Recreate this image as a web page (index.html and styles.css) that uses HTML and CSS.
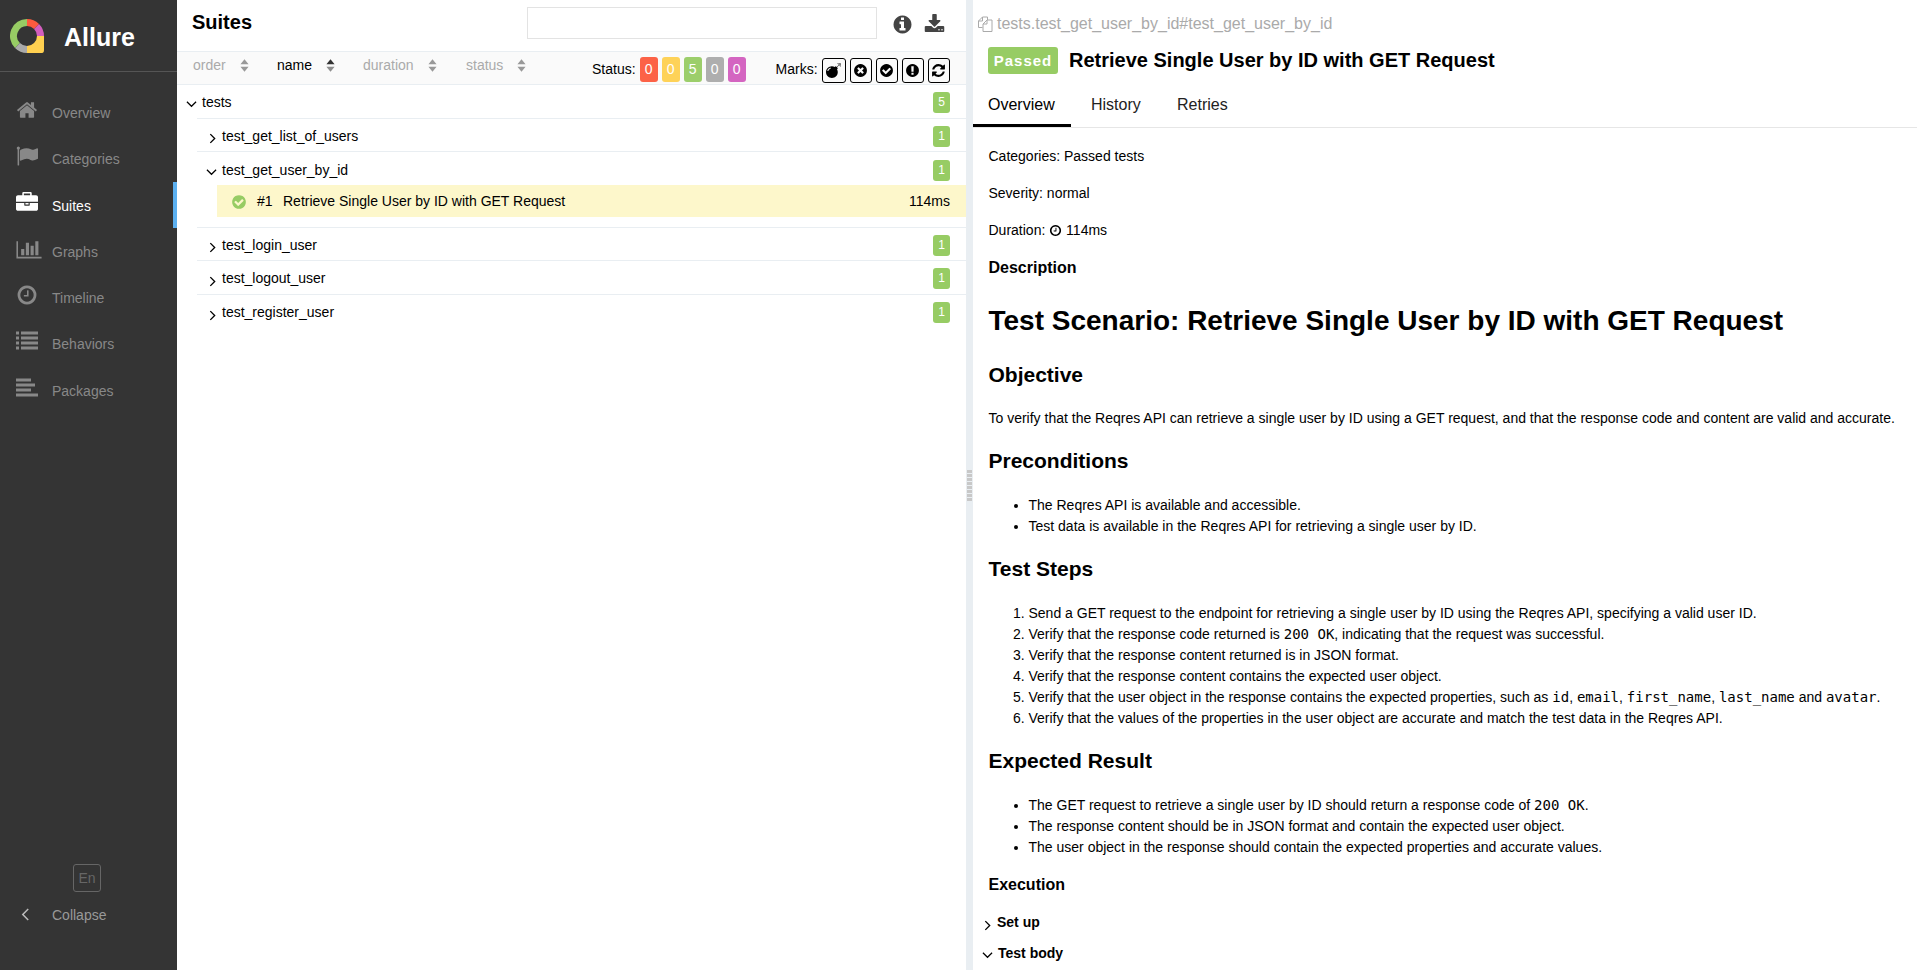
FILE: index.html
```html
<!DOCTYPE html>
<html lang="en">
<head>
    <meta charset="UTF-8">
    <title>Allure Report</title>
    <link rel="stylesheet" href="styles.css">
</head>
<body>
    <svg class="sprite" aria-hidden="true">
        <symbol id="i-home" viewBox="0 0 1792 1792"><path d="M1472 992v480q0 26-19 45t-45 19h-384v-384h-256v384h-384q-26 0-45-19t-19-45v-480q0-1 .5-3t.5-3l575-474 575 474q1 2 1 6zm223-69l-62 74q-8 9-21 11h-3q-13 0-21-7l-692-577-692 577q-12 8-24 7-13-2-21-11l-62-74q-8-10-7-23.5t11-21.5l719-599q32-26 76-26t76 26l244 204v-195q0-14 9-23t23-9h192q14 0 23 9t9 23v408l219 182q10 8 11 21.5t-7 23.5z"/></symbol>
        <symbol id="i-flag" viewBox="0 0 1792 1792"><path d="M320 256q0 72-64 110v1266q0 13-9.5 22.5t-22.5 9.5h-64q-13 0-22.5-9.5t-9.5-22.5v-1266q-64-38-64-110 0-53 37.5-90.5t90.5-37.5 90.5 37.5 37.5 90.5zm1472 64v763q0 25-12.5 38.5t-39.5 27.5q-215 116-369 116-61 0-123.5-22t-108.5-48-115.5-48-142.5-22q-192 0-464 146-17 9-33 9-26 0-45-19t-19-45v-742q0-32 31-55 21-14 79-43 236-120 421-120 107 0 200 29t219 88q38 19 88 19 54 0 117.5-21t110-47 88-47 54.5-21q26 0 45 19t19 45z"/></symbol>
        <symbol id="i-briefcase" viewBox="0 0 1792 1792"><path d="M640 256h512v-128h-512v128zm1152 640v480q0 66-47 113t-113 47h-1472q-66 0-113-47t-47-113v-480h672v160q0 26 19 45t45 19h320q26 0 45-19t19-45v-160h672zm-768 0v128h-256v-128h256zm768-480v384h-1792v-384q0-66 47-113t113-47h352v-160q0-40 28-68t68-28h576q40 0 68 28t28 68v160h352q66 0 113 47t47 113z"/></symbol>
        <symbol id="i-chart" viewBox="0 0 2048 1792"><path d="M640 896v512h-256v-512h256zm384-512v1024h-256v-1024h256zm1024 1152v128h-2048v-1408h128v1280h1920zm-640-896v768h-256v-768h256zm384-384v1152h-256v-1152h256z"/></symbol>
        <symbol id="i-clock" viewBox="0 0 1792 1792"><path d="M1024 544v448q0 14-9 23t-23 9h-320q-14 0-23-9t-9-23v-64q0-14 9-23t23-9h224v-352q0-14 9-23t23-9h64q14 0 23 9t9 23zm416 352q0-148-73-273t-198-198-273-73-273 73-198 198-73 273 73 273 198 198 273 73 273-73 198-198 73-273zm224 0q0 209-103 385.5t-279.5 279.5-385.5 103-385.5-103-279.5-279.5-103-385.5 103-385.5 279.5-279.5 385.5-103 385.5 103 279.5 279.5 103 385.5z"/></symbol>
        <symbol id="i-list" viewBox="0 0 22 19"><path d="M0 0h3v3h-3zM5 0h17v3h-17zM0 5h3v3h-3zM5 5h17v3h-17zM0 10h3v3h-3zM5 10h17v3h-17zM0 15h3v3h-3zM5 15h17v3h-17z"/></symbol>
        <symbol id="i-packages" viewBox="0 0 22 19"><path d="M0 0h15v3h-15zM0 5h19v3h-19zM0 10h15v3h-15zM0 15h22v3h-22z"/></symbol>
        <symbol id="i-check" viewBox="0 0 1792 1792"><path d="M1412 734q0-28-18-46l-91-90q-19-19-45-19t-45 19l-408 407-226-226q-19-19-45-19t-45 19l-91 90q-18 18-18 46 0 27 18 45l362 362q19 19 45 19 27 0 46-19l543-543q18-18 18-45zm252 162q0 209-103 385.5t-279.5 279.5-385.5 103-385.5-103-279.5-279.5-103-385.5 103-385.5 279.5-279.5 385.5-103 385.5 103 279.5 279.5 103 385.5z"/></symbol>
        <symbol id="i-times" viewBox="0 0 1792 1792"><path d="M1277 1122q0-26-19-45l-181-181 181-181q19-19 19-45 0-27-19-46l-90-90q-19-19-46-19-26 0-45 19l-181 181-181-181q-19-19-45-19-27 0-46 19l-90 90q-19 19-19 46 0 26 19 45l181 181-181 181q-19 19-19 45 0 27 19 46l90 90q19 19 46 19 26 0 45-19l181-181 181 181q19 19 45 19 27 0 46-19l90-90q19-19 19-46zm387-226q0 209-103 385.5t-279.5 279.5-385.5 103-385.5-103-279.5-279.5-103-385.5 103-385.5 279.5-279.5 385.5-103 385.5 103 279.5 279.5 103 385.5z"/></symbol>
        <symbol id="i-excl" viewBox="0 0 1792 1792"><path d="M896 128q209 0 385.5 103t279.5 279.5 103 385.5-103 385.5-279.5 279.5-385.5 103-385.5-103-279.5-279.5-103-385.5 103-385.5 279.5-279.5 385.5-103zm128 1247v-190q0-14-9-23.5t-22-9.5h-192q-13 0-23 10t-10 23v190q0 13 10 23t23 10h192q13 0 22-9.5t9-23.5zm-2-344l18-621q0-12-10-18-10-8-24-8h-220q-14 0-24 8-10 6-10 18l17 621q0 10 10 17.5t24 7.5h185q14 0 23.5-7.5t10.5-17.5z"/></symbol>
        <symbol id="i-info" viewBox="0 0 1792 1792"><path d="M1152 1376v-160q0-14-9-23t-23-9h-96v-512q0-14-9-23t-23-9h-320q-14 0-23 9t-9 23v160q0 14 9 23t23 9h96v320h-96q-14 0-23 9t-9 23v160q0 14 9 23t23 9h448q14 0 23-9t9-23zm-128-896v-160q0-14-9-23t-23-9h-192q-14 0-23 9t-9 23v160q0 14 9 23t23 9h192q14 0 23-9t9-23zm640 416q0 209-103 385.5t-279.5 279.5-385.5 103-385.5-103-279.5-279.5-103-385.5 103-385.5 279.5-279.5 385.5-103 385.5 103 279.5 279.5 103 385.5z"/></symbol>
        <symbol id="i-refresh" viewBox="0 0 1792 1792"><path d="M1639 1056q0 5-1 7-64 268-268 434.5t-478 166.5q-146 0-282.5-55t-243.5-157l-129 129q-19 19-45 19t-45-19-19-45v-448q0-26 19-45t45-19h448q26 0 45 19t19 45-19 45l-137 137q71 66 161 102t187 36q134 0 250-65t186-179q11-17 53-117 8-23 30-23h192q13 0 22.5 9.5t9.5 22.5zm25-800v448q0 26-19 45t-45 19h-448q-26 0-45-19t-19-45 19-45l138-138q-148-137-349-137-134 0-250 65t-186 179q-11 17-53 117-8 23-30 23h-199q-13 0-22.5-9.5t-9.5-22.5v-7q65-268 270-434.5t480-166.5q146 0 284 55.5t245 156.5l130-129q19-19 45-19t45 19 19 45z"/></symbol>
        <symbol id="i-download" viewBox="0 0 1792 1792"><path d="M1344 1344q0-26-19-45t-45-19-45 19-19 45 19 45 45 19 45-19 19-45zm256 0q0-26-19-45t-45-19-45 19-19 45 19 45 45 19 45-19 19-45zm128-224v320q0 40-28 68t-68 28h-1472q-40 0-68-28t-28-68v-320q0-40 28-68t68-28h465l135 136q58 56 136 56t136-56l136-136h464q40 0 68 28t28 68zm-325-569q17 41-14 70l-448 448q-18 19-45 19t-45-19l-448-448q-31-29-14-70 17-39 59-39h256v-448q0-26 19-45t45-19h256q26 0 45 19t19 45v448h256q42 0 59 39z"/></symbol>
        <symbol id="i-bomb" viewBox="0 0 1792 1792"><path d="M571 589q-10-25-34-35t-49 0q-108 44-191 127t-127 191q-10 25 0 49t35 34q13 5 24 5 42 0 60-40 34-84 98.5-148.5t148.5-98.5q25-11 35-35t0-49zm942-356l46 46-244 243 68 68q19 19 19 45.5t-19 45.5l-64 64q89 161 89 343 0 143-55.5 273.5t-150 225-225 150-273.5 55.5-273.5-55.5-225-150-150-225-55.5-273.5 55.5-273.5 150-225 225-150 273.5-55.5q182 0 343 89l64-64q19-19 45.5-19t45.5 19l68 68zm8-56q-10 10-22 10-13 0-23-10l-91-90q-9-10-9-23t9-23q10-9 23-9t23 9l90 91q10 9 10 22.5t-10 22.5zm230 230q-11 9-23 9t-23-9l-90-91q-10-9-10-22.5t10-22.5q9-10 22.5-10t22.5 10l91 90q9 10 9 23t-9 23zm41-183q0 14-9 23t-23 9h-96q-14 0-23-9t-9-23 9-23 23-9h96q14 0 23 9t9 23zm-192-192v96q0 14-9 23t-23 9-23-9-9-23v-96q0-14 9-23t23-9 23 9 9 23zm151 55l-91 90q-10 10-22 10-13 0-23-10-10-9-10-22.5t10-22.5l90-91q10-9 23-9t23 9q9 10 9 23t-9 23z"/></symbol>
        <symbol id="i-sort" viewBox="0 0 10 14"><path d="M5 0l4.500 5.500h-9zM5 14l4.500-5.500h-9z"/></symbol>
        <symbol id="i-sort-up" viewBox="0 0 10 14"><path d="M5 0l4.500 5.500h-9z"/><path d="M5 14l4.500-5.500h-9z" opacity=".55"/></symbol>
        <symbol id="i-down" viewBox="0 0 12 8"><path d="M1 1.500l5 5 5-5" fill="none" stroke="currentColor" stroke-width="1.300"/></symbol>
        <symbol id="i-right" viewBox="0 0 8 12"><path d="M1.500 1l5 5-5 5" fill="none" stroke="currentColor" stroke-width="1.500"/></symbol>
        <symbol id="i-copy" viewBox="0 0 16 16"><path d="M5.500 11.500h-4v-6.500l4-4h5v3M5.500 1v4h-4M6 15.500v-7.500l4-4h5v11.500zM10 4v4h-4" fill="none" stroke="currentColor"/></symbol>
    </svg>

    <div class="app">
        <aside class="side-nav">
            <div class="brand">
                <svg class="brand-logo" viewBox="0 0 34 34">
                    <path d="M17 3.500A13.500 13.500 0 0 0 7.450 26.550" fill="none" stroke="#97cc64" stroke-width="7"/>
                    <path d="M7.450 26.550A13.500 13.500 0 0 0 17 30.500" fill="none" stroke="#aaa" stroke-width="7"/>
                    <path d="M17 3.500A13.500 13.500 0 0 1 26.550 7.450" fill="none" stroke="#fd5a3e" stroke-width="7"/>
                    <path d="M26.550 7.450A13.500 13.500 0 0 1 30.500 17" fill="none" stroke="#d35ebe" stroke-width="7"/>
                    <path d="M17 27A10 10 0 0 0 27 17H34V31Q34 34 32 34H17Z" fill="#ffd050"/>
                </svg>
                <span class="brand-name">Allure</span>
            </div>
            <nav class="menu">
                <a class="menu-item"><svg class="menu-icon"><use href="#i-home"/></svg>Overview</a>
                <a class="menu-item"><svg class="menu-icon"><use href="#i-flag"/></svg>Categories</a>
                <a class="menu-item active"><svg class="menu-icon"><use href="#i-briefcase"/></svg>Suites</a>
                <a class="menu-item"><svg class="menu-icon wide"><use href="#i-chart"/></svg>Graphs</a>
                <a class="menu-item"><svg class="menu-icon"><use href="#i-clock"/></svg>Timeline</a>
                <a class="menu-item"><svg class="menu-icon"><use href="#i-list"/></svg>Behaviors</a>
                <a class="menu-item"><svg class="menu-icon"><use href="#i-packages"/></svg>Packages</a>
            </nav>
            <div class="side-foot">
                <div class="lang">En</div>
                <a class="collapse"><svg class="collapse-icon" viewBox="0 0 8 12"><path d="M6.500 1l-5 5 5 5" fill="none" stroke="currentColor" stroke-width="1.400"/></svg>Collapse</a>
            </div>
        </aside>

        <main class="suites">
            <header class="suites-head">
                <h2 class="pane-title">Suites</h2>
                <input class="search" type="text">
                <svg class="head-icon info"><use href="#i-info"/></svg>
                <svg class="head-icon"><use href="#i-download"/></svg>
            </header>
            <div class="toolbar">
                <span class="sort s-order">order<svg class="sort-icon"><use href="#i-sort"/></svg></span>
                <span class="sort s-name current">name<svg class="sort-icon"><use href="#i-sort-up"/></svg></span>
                <span class="sort s-duration">duration<svg class="sort-icon"><use href="#i-sort"/></svg></span>
                <span class="sort s-status">status<svg class="sort-icon"><use href="#i-sort"/></svg></span>
                <div class="filter status-filter">
                    <span class="filter-label">Status:</span>
                    <span class="count red">0</span>
                    <span class="count yellow">0</span>
                    <span class="count green">5</span>
                    <span class="count grey">0</span>
                    <span class="count purple">0</span>
                </div>
                <div class="filter marks-filter">
                    <span class="filter-label">Marks:</span>
                    <span class="mark first"><svg><use href="#i-bomb"/></svg></span>
                    <span class="mark"><svg><use href="#i-times"/></svg></span>
                    <span class="mark"><svg><use href="#i-check"/></svg></span>
                    <span class="mark"><svg><use href="#i-excl"/></svg></span>
                    <span class="mark"><svg><use href="#i-refresh"/></svg></span>
                </div>
            </div>
            <div class="tree">
                <div class="row root"><svg class="arrow-d"><use href="#i-down"/></svg><span class="row-name">tests</span><span class="count-sm">5</span></div>
                <div class="row"><svg class="arrow-r"><use href="#i-right"/></svg><span class="row-name">test_get_list_of_users</span><span class="count-sm">1</span></div>
                <div class="row no-line"><svg class="arrow-d"><use href="#i-down"/></svg><span class="row-name">test_get_user_by_id</span><span class="count-sm">1</span></div>
                <div class="leaf-wrap">
                    <div class="leaf">
                        <svg class="leaf-icon"><use href="#i-check"/></svg>
                        <span class="leaf-order">#1</span>
                        <span class="leaf-name">Retrieve Single User by ID with GET Request</span>
                        <span class="leaf-time">114ms</span>
                    </div>
                </div>
                <div class="row"><svg class="arrow-r"><use href="#i-right"/></svg><span class="row-name">test_login_user</span><span class="count-sm">1</span></div>
                <div class="row"><svg class="arrow-r"><use href="#i-right"/></svg><span class="row-name">test_logout_user</span><span class="count-sm">1</span></div>
                <div class="row no-line"><svg class="arrow-r"><use href="#i-right"/></svg><span class="row-name">test_register_user</span><span class="count-sm">1</span></div>
            </div>
        </main>

        <div class="splitter"><span class="grip"></span></div>

        <section class="detail">
            <div class="path"><svg class="copy-icon"><use href="#i-copy"/></svg>tests.test_get_user_by_id#test_get_user_by_id</div>
            <div class="title-row">
                <span class="passed">Passed</span>
                <h2 class="test-title">Retrieve Single User by ID with GET Request</h2>
            </div>
            <div class="tabs">
                <a class="tab active">Overview</a>
                <a class="tab">History</a>
                <a class="tab">Retries</a>
            </div>
            <div class="body">
                <p class="meta">Categories: Passed tests</p>
                <p class="meta">Severity: normal</p>
                <p class="meta">Duration: <svg class="meta-clock"><use href="#i-clock"/></svg> 114ms</p>
                <h3 class="section">Description</h3>
                <h1 class="md-h1">Test Scenario: Retrieve Single User by ID with GET Request</h1>
                <h2 class="md-h2">Objective</h2>
                <p class="md-p">To verify that the Reqres API can retrieve a single user by ID using a GET request, and that the response code and content are valid and accurate.</p>
                <h2 class="md-h2">Preconditions</h2>
                <ul class="md-list">
                    <li>The Reqres API is available and accessible.</li>
                    <li>Test data is available in the Reqres API for retrieving a single user by ID.</li>
                </ul>
                <h2 class="md-h2">Test Steps</h2>
                <ol class="md-list">
                    <li>Send a GET request to the endpoint for retrieving a single user by ID using the Reqres API, specifying a valid user ID.</li>
                    <li>Verify that the response code returned is <code>200 OK</code>, indicating that the request was successful.</li>
                    <li>Verify that the response content returned is in JSON format.</li>
                    <li>Verify that the response content contains the expected user object.</li>
                    <li>Verify that the user object in the response contains the expected properties, such as <code>id</code>, <code>email</code>, <code>first_name</code>, <code>last_name</code> and <code>avatar</code>.</li>
                    <li>Verify that the values of the properties in the user object are accurate and match the test data in the Reqres API.</li>
                </ol>
                <h2 class="md-h2">Expected Result</h2>
                <ul class="md-list">
                    <li>The GET request to retrieve a single user by ID should return a response code of <code>200 OK</code>.</li>
                    <li>The response content should be in JSON format and contain the expected user object.</li>
                    <li>The user object in the response should contain the expected properties and accurate values.</li>
                </ul>
                <h3 class="section exec">Execution</h3>
                <div class="stage"><svg class="arrow-r"><use href="#i-right"/></svg>Set up</div>
                <div class="stage"><svg class="arrow-d"><use href="#i-down"/></svg>Test body</div>
            </div>
        </section>
    </div>
</body>
</html>
```

FILE: styles.css
```css
* {
    box-sizing: border-box;
}
html, body {
    margin: 0;
    height: 100%;
    overflow: hidden;
}
body {
    font-family: "Liberation Sans", Arial, sans-serif;
    font-size: 14px;
    line-height: 21px;
    color: #000;
    background: #fff;
}
.sprite {
    position: absolute;
    width: 0;
    height: 0;
}
svg {
    fill: currentColor;
}
.app {
    display: flex;
    height: 970px;
}

/* side nav */
.side-nav {
    width: 177px;
    flex: none;
    display: flex;
    flex-direction: column;
    background: #343434;
    color: #999;
}
.brand {
    height: 72px;
    flex: none;
    display: flex;
    align-items: center;
    padding-left: 10px;
    border-bottom: 1px solid #555;
}
.brand-logo {
    width: 34px;
    height: 34px;
}
.brand-name {
    margin: 3px 0 0 20px;
    font-size: 25px;
    font-weight: bold;
    color: #fff;
}
.menu {
    margin-top: 17px;
}
.menu-item {
    display: flex;
    align-items: center;
    height: 46.25px;
    padding: 3px 0 0 16px;
    color: #888;
    border-right: 4px solid transparent;
}
.menu-item.active {
    color: #fff;
    border-right-color: #5cb0f0;
}
.menu-icon {
    width: 22px;
    height: 22px;
    margin: -7px 14px 0 0;
    flex: none;
}
.menu-icon.wide {
    width: 26px;
    margin-right: 10px;
}
.side-foot {
    margin-top: auto;
    padding-bottom: 44px;
}
.lang {
    width: 28px;
    height: 28px;
    margin-left: 73px;
    border: 1px solid #666;
    border-radius: 3px;
    color: #666;
    text-align: center;
    line-height: 26px;
}
.collapse {
    display: flex;
    align-items: center;
    margin-top: 13px;
    padding-left: 21px;
    color: #999;
}
.collapse-icon {
    width: 9px;
    height: 13px;
    margin: -3px 22px 0 0;
    color: #bbb;
}

/* suites pane */
.suites {
    width: 789px;
    flex: none;
}
.suites-head {
    height: 51px;
    display: flex;
    align-items: center;
    padding: 0 21px 6px 15px;
}
.pane-title {
    margin: 0;
    font-size: 20px;
    font-weight: bold;
    line-height: 21px;
    flex: 1;
}
.search {
    width: 350px;
    height: 32px;
    border: 1px solid #e3e3e3;
    background: #fff;
}
.head-icon {
    width: 21px;
    height: 21px;
    margin: 3px 0 0 11px;
    color: #444;
}
.head-icon.info {
    margin-left: 15px;
}
.toolbar {
    height: 34px;
    display: flex;
    border-top: 1px solid #e9eef2;
    border-bottom: 1px solid #e9eef2;
    background: #fafafa;
}
.sort {
    display: flex;
    align-items: center;
    height: 27px;
    flex: none;
    color: #aaa;
}
.sort.current {
    color: #000;
}
.s-order {
    width: 100px;
    padding-left: 16px;
}
.s-name {
    width: 86px;
}
.s-duration {
    width: 103px;
}
.s-status {
    width: 100px;
}
.sort-icon {
    width: 9px;
    height: 13px;
    margin-left: 14px;
    flex: none;
    color: #999;
}
.sort.current .sort-icon {
    color: #333;
}
.filter {
    display: flex;
    align-items: center;
    gap: 4px;
}
.status-filter {
    margin-left: 26px;
}
.marks-filter {
    margin-left: 30px;
}
.count {
    width: 18px;
    height: 25px;
    margin-top: 3px;
    border-radius: 3px;
    color: #fff;
    text-align: center;
    line-height: 25px;
    font-size: 14px;
    opacity: .95;
}
.red { background: #fd5a3e; }
.yellow { background: #ffd050; }
.green { background: #97cc64; }
.grey { background: #aaa; }
.purple { background: #d35ebe; }
.filter-label {
    margin-top: 3px;
}
.mark {
    width: 22px;
    height: 25px;
    margin-top: 4px;
    border: 1px solid #000;
    border-radius: 3px;
    display: flex;
    align-items: center;
    justify-content: center;
}
.mark.first {
    width: 24px;
}
.mark svg {
    width: 15px;
    height: 15px;
}

/* tree */
.row {
    height: 33.5px;
    margin-left: 20px;
    display: flex;
    align-items: center;
    padding: 3px 16px 0 0;
    border-bottom: 1px solid #e9eef2;
}
.row.no-line {
    height: 33px;
    border-bottom: 0;
}
.row .row-name {
    flex: 1;
}
.arrow-d {
    width: 11px;
    height: 8px;
    margin: 3px 5px 0 9px;
    flex: none;
}
.arrow-r {
    width: 7px;
    height: 11px;
    margin: 5px 6px 0 12px;
    flex: none;
}
.row.root {
    margin-left: 0;
    padding-top: 1px;
    border-bottom: 0;
    position: relative;
}
.row.root::after {
    content: "";
    position: absolute;
    left: 20px;
    right: 0;
    bottom: 0;
    border-bottom: 1px solid #e9eef2;
}
.count-sm {
    width: 17px;
    height: 21px;
    border-radius: 3px;
    background: #97cc64;
    color: #fff;
    font-size: 12px;
    line-height: 21px;
    text-align: center;
}
.leaf-wrap {
    height: 42.5px;
    margin-left: 20px;
    padding-left: 20px;
    border-bottom: 1px solid #e9eef2;
}
.leaf {
    height: 32px;
    display: flex;
    align-items: center;
    padding: 1px 16px 0 14px;
    background: #fdf7cb;
}
.leaf-icon {
    width: 16px;
    height: 16px;
    color: #97cc64;
    flex: none;
}
.leaf-order {
    width: 26px;
    margin-left: 10px;
}
.leaf-name {
    flex: 1;
}

/* splitter */
.splitter {
    width: 7px;
    flex: none;
    background: #e9eef2;
    display: flex;
    align-items: center;
    justify-content: center;
}
.grip {
    width: 5px;
    height: 31px;
    background: repeating-linear-gradient(to bottom, #c8c8c8 0, #c8c8c8 3px, transparent 3px, transparent 4px);
}

/* detail pane */
.detail {
    flex: 1;
    min-width: 0;
    overflow: hidden;
}
.path {
    display: flex;
    align-items: center;
    height: 23px;
    margin-top: 12px;
    padding-left: 4px;
    color: #aaa;
    font-size: 16px;
}
.copy-icon {
    width: 16px;
    height: 16px;
    margin-right: 4px;
    color: #aaa;
}
.title-row {
    display: flex;
    align-items: center;
    height: 27px;
    margin-top: 12px;
    padding-left: 15px;
}
.passed {
    width: 70px;
    height: 27px;
    border-radius: 3px;
    background: #97cc64;
    color: #fff;
    font-weight: bold;
    font-size: 15px;
    letter-spacing: 1px;
    text-align: center;
    line-height: 27px;
}
.test-title {
    margin: 0 0 0 11px;
    font-size: 20px;
    font-weight: bold;
}
.tabs {
    display: flex;
    height: 42px;
    margin-top: 12px;
    border-bottom: 1px solid #e6e6e6;
}
.tab {
    width: 86px;
    height: 41px;
    padding: 8px 0 0 20px;
    font-size: 16px;
    color: #222;
}
.tab.active {
    width: 98px;
    padding-left: 15px;
    color: #000;
    border-bottom: 3px solid #000;
}
.body {
    padding: 18px 13px 0 15.5px;
}
.meta {
    margin: 0 0 16px;
}
.meta-clock {
    width: 13px;
    height: 13px;
    vertical-align: -2px;
}
.section {
    margin: 0;
    font-size: 16px;
    font-weight: bold;
    line-height: 21px;
}
.md-h1 {
    margin: 26px 0 23.5px;
    font-size: 28px;
    line-height: 34px;
    font-weight: bold;
}
.md-h2 {
    margin: 18.5px 0 0;
    font-size: 21px;
    line-height: 26px;
    font-weight: bold;
}
.md-p {
    margin: 20.5px 0 0;
}
.md-list {
    margin: 21.5px 0 0;
    padding-left: 40px;
}
.md-list + .md-h2 {
    margin-top: 18.5px;
}
code {
    font-family: "DejaVu Sans Mono", monospace;
    font-size: 14px;
    line-height: 1;
}
.exec {
    margin-top: 16px;
}
.stage {
    display: flex;
    align-items: center;
    margin: 17px 0 0 -15.5px;
    font-weight: bold;
}
.stage:last-child {
    margin-top: 10px;
}
.stage .arrow-r {
    margin: 5px 6px 0 11px;
}
.stage .arrow-d {
    margin: 3px 5px 0 9px;
}
```
